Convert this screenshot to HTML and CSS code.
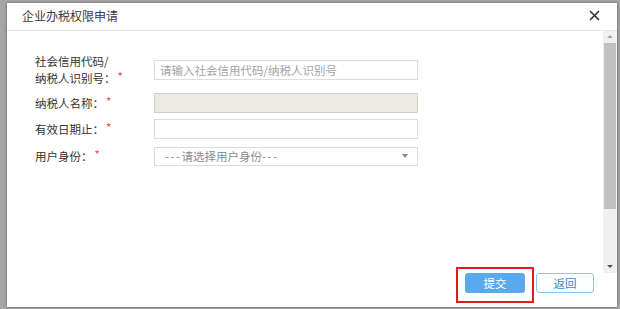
FILE: index.html
```html
<!DOCTYPE html>
<html lang="zh-CN">
<head>
    <meta charset="UTF-8">
    <meta name="viewport" content="width=device-width, initial-scale=1.0">
    <title>企业办税权限申请</title>
    <link rel="stylesheet" href="styles.css">
</head>
<body>
    <div class="dialog">
        <div class="dialog-head">
            <span class="title">企业办税权限申请</span>
            <span class="close">
                <svg width="11" height="11" viewBox="0 0 11 11">
                    <path d="M1 1L10 10M10 1L1 10" stroke="#333" stroke-width="1.6" fill="none"/>
                </svg>
            </span>
        </div>
        <div class="dialog-main">
            <div class="dialog-body">
                <div class="form">
                    <div class="row row-tall">
                        <label class="label">社会信用代码/<br>纳税人识别号：<span class="req">*</span></label>
                        <input class="field" type="text" placeholder="请输入社会信用代码/纳税人识别号">
                    </div>
                    <div class="row">
                        <label class="label">纳税人名称：<span class="req">*</span></label>
                        <input class="field field-disabled" type="text" disabled>
                    </div>
                    <div class="row">
                        <label class="label">有效日期止：<span class="req">*</span></label>
                        <input class="field" type="text">
                    </div>
                    <div class="row">
                        <label class="label">用户身份：<span class="req">*</span></label>
                        <div class="field select">
                            <span><span class="dash">---</span>请选择用户身份<span class="dash">---</span></span>
                            <span class="caret"></span>
                        </div>
                    </div>
                </div>
            </div>
            <div class="scrollbar">
                <span class="arrow arrow-up"></span>
                <span class="thumb"></span>
                <span class="arrow arrow-down"></span>
            </div>
        </div>
        <div class="dialog-foot">
            <div class="mark-wrap">
                <button class="btn btn-primary">提交</button>
                <span class="mark"></span>
            </div>
            <button class="btn btn-default">返回</button>
        </div>
    </div>
</body>
</html>
```

FILE: styles.css
```css
* {
    box-sizing: border-box;
}
body {
    font-family: "Noto Sans CJK SC", "Liberation Sans", sans-serif;
    margin: 0;
    padding: 3px 3px 2px 7px;
    height: 309px;
    overflow: hidden;
    background-color: #a6a6a6;
    color: #333;
    font-size: 12px;
}
.dialog {
    width: 610px;
    height: 304px;
    background: white;
    box-shadow: 0 0 3px rgba(0, 0, 0, 0.45);
    display: flex;
    flex-direction: column;
}
.dialog-head {
    height: 28px;
    flex-shrink: 0;
    display: flex;
    align-items: center;
    justify-content: space-between;
    padding: 0 17px 2px 15px;
    border-bottom: 1px solid #e6e6e6;
}
.title {
    font-size: 12px;
    color: #3a3a3a;
}
.close {
    display: flex;
}
.dialog-main {
    height: 242px;
    display: flex;
}
.dialog-body {
    flex: 1;
    padding: 22px 0 0 28px;
}
.form {
    display: flex;
    flex-direction: column;
    gap: 6px;
}
.row {
    display: flex;
    align-items: center;
    height: 20px;
}
.row-tall {
    height: 34px;
}
.row:last-child {
    margin-top: 1px;
}
.label {
    width: 119px;
    line-height: 17px;
    font-size: 11.5px;
    color: #333;
}
.req {
    color: #e8474a;
    position: relative;
    top: -2px;
    margin-left: 2px;
}
.field {
    width: 264px;
    height: 20px;
    border: 1px solid #dcdcdc;
    padding: 0 5px;
    font-family: inherit;
    font-size: 11.5px;
    color: #333;
    background: white;
    outline: none;
}
.field::placeholder {
    color: #a3a3a3;
}
.field-disabled {
    background: #ebebe4;
    border-color: #cfcfca;
}
.select {
    display: flex;
    align-items: center;
    justify-content: space-between;
    padding: 0 9px 0 10px;
    color: #8c8c8c;
    height: 19px;
}
.dash {
    letter-spacing: 1.5px;
}
.caret {
    width: 0;
    height: 0;
    border-left: 3px solid transparent;
    border-right: 3px solid transparent;
    border-top: 4px solid #888;
}
.scrollbar {
    width: 14px;
    background: #f0f0f0;
    display: flex;
    flex-direction: column;
    align-items: center;
    padding: 4px 0 5px;
}
.arrow {
    width: 0;
    height: 0;
    border-left: 3px solid transparent;
    border-right: 3px solid transparent;
}
.arrow-up {
    border-bottom: 3px solid #a3a3a3;
}
.arrow-down {
    border-top: 3px solid #505050;
}
.thumb {
    width: 12px;
    height: 166px;
    background: #c1c1c1;
    margin: 5px 0 auto;
}
.dialog-foot {
    flex: 1;
    display: flex;
    justify-content: flex-end;
    align-items: flex-start;
    gap: 11px;
    padding-right: 23px;
}
.mark-wrap {
    position: relative;
    display: flex;
}
.mark {
    position: absolute;
    left: -9px;
    right: -9px;
    top: -6px;
    bottom: -10px;
    border: 2px solid #e8191c;
}
.btn {
    height: 20px;
    border-radius: 3px;
    font-family: inherit;
    font-size: 11.5px;
    padding: 0;
    cursor: pointer;
}
.btn-primary {
    width: 60px;
    border: none;
    background: #5aa9ef;
    color: white;
}
.btn-default {
    width: 58px;
    border: 1px solid #8cc4f3;
    background: white;
    color: #3d7fc4;
}
```
